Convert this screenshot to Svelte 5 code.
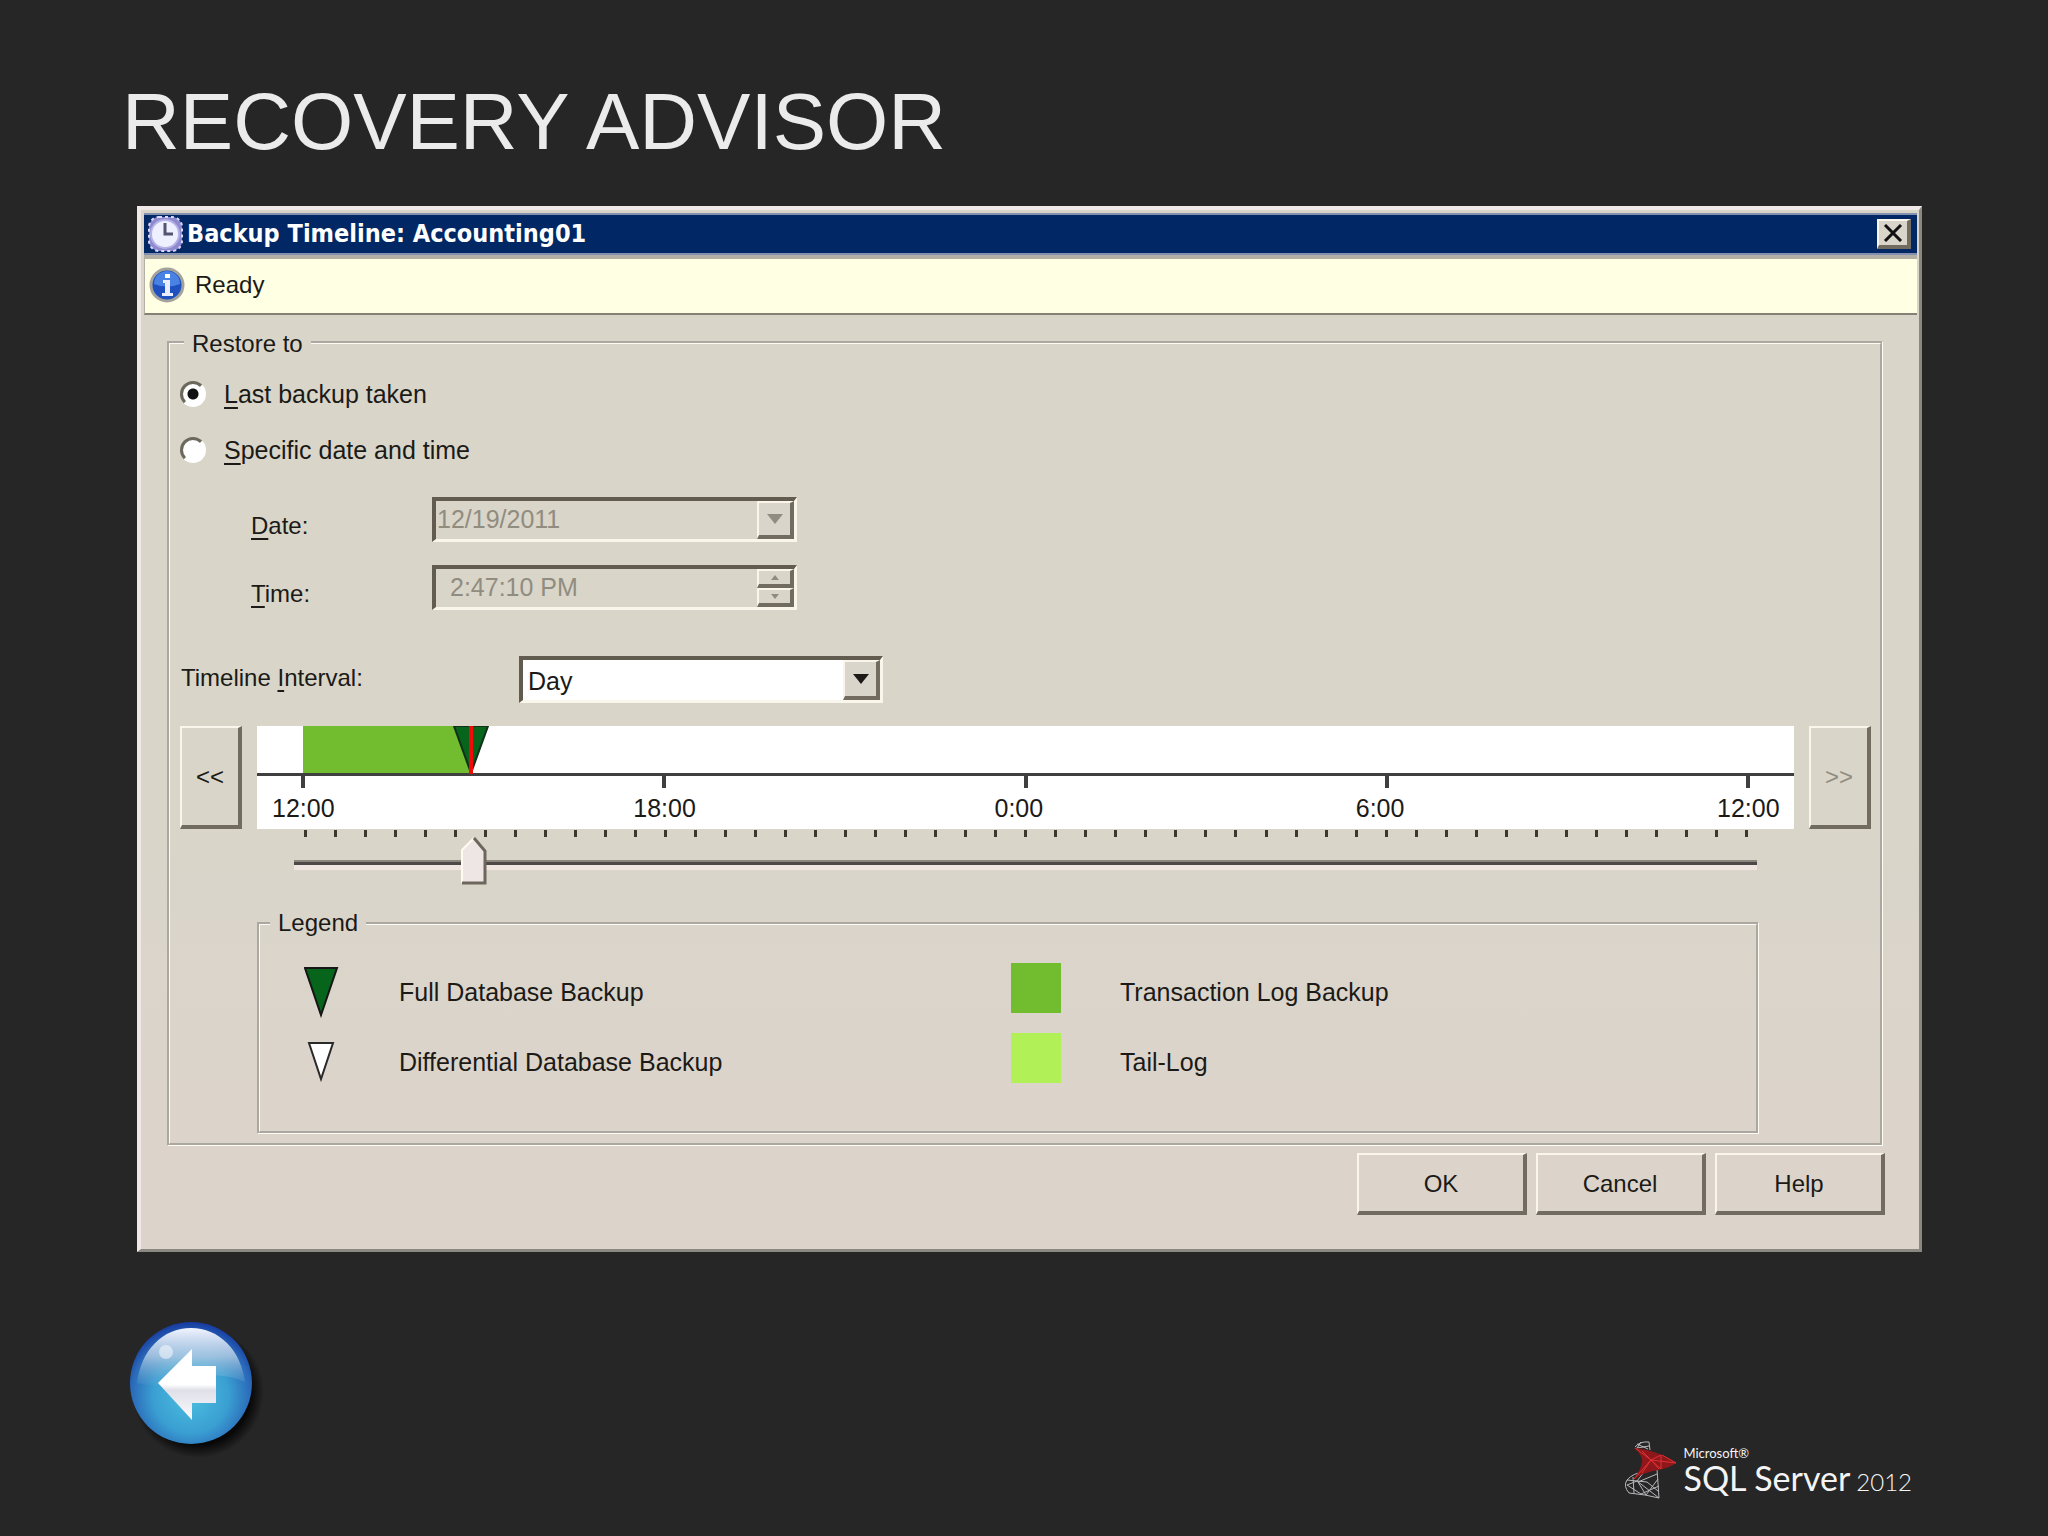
<script>
  const DAY = 1440;

  // minutes since 12:00 at the left end of the scale
  let position = $state(167);
  let restoreTo = $state('last');
  let interval = $state('Day');

  const lastBackup = 167;
  const hours = ['12:00', '18:00', '0:00', '6:00', '12:00'];
  const ticks = Array.from({ length: 49 }, (_, i) => i);
  const intervals = ['Hour', 'Six Hours', 'Day', 'Week'];

  const locked = $derived(restoreTo === 'last');
  const pct = (minutes) => `${(minutes / DAY) * 100}%`;
</script>

<main class="slide">
  <h1>RECOVERY ADVISOR</h1>

  <section class="dialog" aria-labelledby="dialog-title">
    <header class="titlebar">
      <svg class="clock" viewBox="0 0 36 36" aria-hidden="true">
        <rect x="2" y="1" width="33" height="34" rx="10" fill="#8f89cf" stroke="#dcd8fa" stroke-width="2" stroke-dasharray="3 3" />
        <circle cx="18" cy="18" r="14" fill="#eef0ff" stroke="#b5b2e6" stroke-width="2" />
        <path d="M18 7v11h8" fill="none" stroke="#55536f" stroke-width="3" />
      </svg>
      <h2 id="dialog-title">Backup Timeline: Accounting01</h2>
      <button type="button" class="close" aria-label="Close">
        <svg viewBox="0 0 20 18" aria-hidden="true">
          <path d="M2 1l16 16M18 1L2 17" stroke="#111" stroke-width="3" />
        </svg>
      </button>
    </header>

    <div class="status" role="status">
      <svg class="info" viewBox="0 0 36 36" aria-hidden="true">
        <circle cx="18" cy="18" r="16" fill="#1e50c0" stroke="#a3a39c" stroke-width="3" />
        <path d="M5 17a13 13 0 0 1 26 0q-13 5-26 0z" fill="#4a82e4" />
        <rect x="16" y="7" width="5" height="4" fill="#fff" />
        <path d="M14 13h7v13h3v3H13v-3h3V16h-2z" fill="#e8eeff" />
      </svg>
      <span>Ready</span>
    </div>

    <fieldset class="restore">
      <legend>Restore to</legend>

      <label class="choice">
        <input type="radio" name="restore" value="last" bind:group={restoreTo} />
        <span><u>L</u>ast backup taken</span>
      </label>
      <label class="choice">
        <input type="radio" name="restore" value="specific" bind:group={restoreTo} />
        <span><u>S</u>pecific date and time</span>
      </label>

      <div class="when">
        <label for="date"><u>D</u>ate:</label>
        <div class="field">
          <input id="date" type="text" value="12/19/2011" disabled={locked} />
          <button type="button" class="drop" aria-label="Pick a date" disabled={locked}>
            <svg viewBox="0 0 16 10" aria-hidden="true"><path d="M0 0h16L8 10z" fill="currentColor" /></svg>
          </button>
        </div>

        <label for="time"><u>T</u>ime:</label>
        <div class="field">
          <input id="time" class="time" type="text" value="2:47:10 PM" disabled={locked} />
          <div class="spin">
            <button type="button" aria-label="Later" disabled={locked}>
              <svg viewBox="0 0 8 5" aria-hidden="true"><path d="M0 5h8L4 0z" fill="currentColor" /></svg>
            </button>
            <button type="button" aria-label="Earlier" disabled={locked}>
              <svg viewBox="0 0 8 5" aria-hidden="true"><path d="M0 0h8L4 5z" fill="currentColor" /></svg>
            </button>
          </div>
        </div>
      </div>

      <div class="interval">
        <label for="interval">Timeline <u>I</u>nterval:</label>
        <div class="combo">
          <select id="interval" bind:value={interval}>
            {#each intervals as name}
              <option>{name}</option>
            {/each}
          </select>
          <span class="drop" aria-hidden="true">
            <svg viewBox="0 0 16 10"><path d="M0 0h16L8 10z" fill="currentColor" /></svg>
          </span>
        </div>
      </div>

      <div class="timeline">
        <button type="button" class="page" aria-label="Earlier interval">&lt;&lt;</button>

        <div class="chart">
          <div class="bars">
            <div class="log" style:width={pct(lastBackup)}></div>
            <svg class="full" style:left={pct(lastBackup)} viewBox="0 0 36 48" aria-hidden="true">
              <path d="M1 0h34L18 47z" fill="#06651b" stroke="#12301a" stroke-width="2" />
              <path d="M18 0v48" stroke="#f00a0a" stroke-width="4" />
            </svg>
          </div>
          <div class="hours">
            {#each hours as hour}
              <div class="hour"><i></i><span>{hour}</span></div>
            {/each}
          </div>
        </div>

        <button type="button" class="page" aria-label="Later interval" disabled>&gt;&gt;</button>

        <div class="below">
          <div class="ticks">
            {#each ticks as tick (tick)}
              <i></i>
            {/each}
          </div>
          <input
            class="slider"
            type="range"
            min="0"
            max={DAY}
            bind:value={position}
            aria-label="Restore point"
          />

          <fieldset class="key">
            <legend>Legend</legend>
            <div class="entries">
              <svg class="mark" viewBox="0 0 36 52" aria-hidden="true">
                <path d="M1 2h32L17 49z" fill="#06651b" stroke="#161616" stroke-width="2" />
              </svg>
              <span>Full Database Backup</span>
              <i class="swatch transaction"></i>
              <span>Transaction Log Backup</span>

              <svg class="mark" viewBox="0 0 36 52" aria-hidden="true">
                <path d="M5 7h24L17 43z" fill="#fff" stroke="#2a2a2a" stroke-width="2" />
              </svg>
              <span>Differential Database Backup</span>
              <i class="swatch tail"></i>
              <span>Tail-Log</span>
            </div>
          </fieldset>
        </div>
      </div>
    </fieldset>

    <div class="actions">
      <button type="button">OK</button>
      <button type="button">Cancel</button>
      <button type="button">Help</button>
    </div>
  </section>

  <footer>
    <a class="back" href="#previous" aria-label="Previous slide">
      <svg viewBox="0 0 140 140" aria-hidden="true">
        <defs>
          <radialGradient id="shade">
            <stop offset="0.8" stop-color="#000" stop-opacity="0.8" />
            <stop offset="1" stop-color="#000" stop-opacity="0" />
          </radialGradient>
          <radialGradient id="ball" cx="0.5" cy="0.6" r="0.62">
            <stop offset="0" stop-color="#4cc0e0" />
            <stop offset="0.5" stop-color="#3a9fd2" />
            <stop offset="0.8" stop-color="#2a68b8" />
            <stop offset="1" stop-color="#12309a" />
          </radialGradient>
          <linearGradient id="gloss" x2="0" y2="1">
            <stop offset="0" stop-color="#f2f4ff" />
            <stop offset="0.5" stop-color="#b4cde4" stop-opacity="0.8" />
            <stop offset="1" stop-color="#6fb0d4" stop-opacity="0.1" />
          </linearGradient>
          <linearGradient id="arrow" x2="0" y2="1">
            <stop offset="0.5" stop-color="#fff" />
            <stop offset="0.58" stop-color="#dfe0e8" />
            <stop offset="1" stop-color="#fbfbff" />
          </linearGradient>
        </defs>
        <circle cx="73" cy="74" r="66" fill="url(#shade)" />
        <circle cx="66" cy="65" r="61" fill="url(#ball)" />
        <path d="M12 65C16 32 38 10 66 10s50 22 54 54Q94 52 66 62 38 72 12 65z" fill="url(#gloss)" />
        <circle cx="41" cy="34" r="7" fill="#fff" opacity="0.5" />
        <path d="M33 65L67 31v17h24v37H67v17z" fill="url(#arrow)" />
      </svg>
    </a>

    <div class="brand">
      <svg viewBox="0 0 56 62" aria-hidden="true">
        <g fill="none" stroke="#b9b9bd" stroke-width="1">
          <path d="M12 7q5-6 14-5l1 8M14 4l11 5M18 2l-4 6 12-2" />
          <path d="M34 29l2 29-14-3-16-2Q0 46 4 40q6-7 17-8l13-3z" />
          <path d="M21 32l-7 9-10 4 14 9 18-8M14 41l22 17M34 34l-19 8 8 13 12-16M4 40l20 2 11 9M10 37l1 16" />
        </g>
        <path d="M11 8q14 1 28 7 10 4 14 8-6 5-18 7-14 2-25 10 9-12 9-19 0-7-8-13z" fill="#8e171b" />
        <path d="M12 8l16 12 25 3M19 11l9 9-9 13M28 20l10-5 0 14-10-9M11 39l17-19 8 9M39 15l14 8" fill="none" stroke="#e03133" stroke-width="1" />
      </svg>
      <div class="wordmark">
        <span class="maker">Microsoft®</span>
        <span class="product">SQL Server<small>2012</small></span>
      </div>
    </div>
  </footer>
</main>

<style>
  :global(body) {
    margin: 0;
    background: #262626;
  }

  .slide {
    --face: #dad5ca;
    --light: #fbf6ec;
    --dark: #716b60;
    box-sizing: border-box;
    min-height: 100vh;
    padding: 76px 126px 24px 137px;
    font-family: 'Liberation Sans', Arial, sans-serif;
    font-size: 24px;
    line-height: 28px;
    color: #1b1a17;
  }

  h1 {
    margin: 0 0 38px -15px;
    font-size: 80px;
    line-height: 92px;
    font-weight: 400;
    color: #ebebeb;
  }

  button,
  input,
  select {
    box-sizing: border-box;
    margin: 0;
    font: inherit;
    color: inherit;
  }

  button {
    display: flex;
    align-items: center;
    justify-content: center;
    padding: 0;
    border: solid;
    border-width: 2px 4px 4px 2px;
    border-color: var(--light) var(--dark) var(--dark) var(--light);
    background: transparent;
  }

  u {
    text-decoration-thickness: 2px;
    text-underline-offset: 4px;
    text-decoration-skip-ink: none;
  }

  .dialog {
    padding: 3px 2px 34px 3px;
    border: solid;
    border-width: 4px 3px 3px 4px;
    border-color: #efe8e6 #8b8781 #8b8781 #efe8e6;
    background: linear-gradient(#d9d5c9 60%, #dcd4cb 85%);
  }

  .titlebar {
    display: flex;
    align-items: center;
    height: 38px;
    padding: 0 6px 0 3px;
    border: solid #8490b0;
    border-width: 2px 0;
    background: #022765;
    color: #fff;
  }

  .clock,
  .info {
    width: 36px;
    height: 36px;
  }

  h2 {
    flex: 1;
    margin: 0 0 0 4px;
    font-family: 'DejaVu Sans Condensed', 'DejaVu Sans', sans-serif;
    font-size: 25px;
    line-height: 32px;
    font-weight: 700;
  }

  .close {
    width: 34px;
    height: 30px;
    background: var(--face);
  }

  .close svg {
    width: 20px;
    height: 18px;
  }

  .status {
    display: flex;
    align-items: center;
    gap: 10px;
    box-sizing: border-box;
    height: 60px;
    padding: 0 0 3px 4px;
    border: solid #b5b0a6;
    border-width: 4px 0 2px 1px;
    border-bottom-color: #858174;
    background: #ffffe4;
  }

  fieldset {
    min-width: 0;
    margin: 0;
    border: 3px groove #fffaf2;
  }

  legend {
    margin-left: 10px;
    padding: 0 8px;
  }

  .restore {
    margin: 11px 34px 0 23px;
    padding: 8px 9px 9px 10px;
  }

  .restore > legend {
    margin-left: 4px;
    padding-top: 4px;
  }

  .choice {
    display: flex;
    align-items: center;
    gap: 18px;
    width: max-content;
    height: 56px;
    font-size: 25px;
  }

  .choice input {
    appearance: none;
    width: 26px;
    height: 26px;
    border: 3px solid;
    border-color: #6d685d #fff #fff #6d685d;
    border-radius: 50%;
    background: #fff;
  }

  .choice input:checked {
    background: radial-gradient(circle, #111 5px, #fff 6px);
  }

  .when {
    display: grid;
    grid-template-columns: 181px 365px;
    grid-auto-rows: 68px;
    align-items: center;
    margin: 7px 0 0 71px;
  }

  .when label {
    padding-top: 14px;
  }

  .field {
    display: flex;
    box-sizing: border-box;
    height: 45px;
    border: solid;
    border-width: 4px 3px 3px 4px;
    border-color: #615b50 var(--light) var(--light) #615b50;
  }

  .field input {
    flex: 1;
    min-width: 0;
    padding: 0 0 2px 1px;
    border: 0;
    background: transparent;
    font-size: 25px;
  }

  .field input:disabled,
  button:disabled {
    color: #918c80;
  }

  .field input.time {
    padding-left: 14px;
  }

  .drop {
    display: flex;
    align-items: center;
    justify-content: center;
    box-sizing: border-box;
    width: 37px;
    border: solid;
    border-width: 2px 4px 4px 2px;
    border-color: var(--light) var(--dark) var(--dark) var(--light);
    background: var(--face);
  }

  .drop svg {
    width: 16px;
    height: 10px;
  }

  .spin {
    display: grid;
    grid-template-rows: 1fr 1fr;
    width: 37px;
  }

  .spin svg {
    width: 8px;
    height: 5px;
  }

  .interval {
    display: grid;
    grid-template-columns: 338px 364px;
    align-items: center;
    margin: 35px 0 23px 1px;
  }

  .interval label {
    padding-bottom: 4px;
  }

  .combo {
    display: grid;
    grid-template-columns: 1fr 37px;
    box-sizing: border-box;
    height: 47px;
    border: solid;
    border-width: 4px 3px 3px 4px;
    border-color: #615b50 var(--light) var(--light) #615b50;
    background: #fff;
  }

  .combo select {
    appearance: none;
    grid-area: 1 / 1 / 2 / 3;
    padding: 1px 0 0 5px;
    border: 0;
    background: transparent;
    font-size: 25px;
  }

  .combo .drop {
    grid-area: 1 / 2;
    pointer-events: none;
  }

  .timeline {
    display: grid;
    grid-template-columns: 62px 1fr 62px;
    column-gap: 15px;
  }

  .page {
    height: 103px;
  }

  .chart {
    height: 103px;
    background: #fff;
  }

  .bars {
    position: relative;
    height: 47px;
    margin: 0 46px;
  }

  .log {
    height: 100%;
    background: #72bd2f;
  }

  .full {
    position: absolute;
    top: 0;
    width: 36px;
    height: 48px;
    margin-left: -18px;
  }

  .hours {
    display: flex;
    justify-content: space-between;
    padding: 0 46px;
    border-top: 3px solid #3f3f3f;
  }

  .hour {
    display: flex;
    flex-direction: column;
    align-items: center;
    width: 0;
  }

  .hour i {
    width: 4px;
    height: 12px;
    background: #3f3f3f;
  }

  .hour span {
    width: 62px;
    margin-top: 6px;
    font-size: 25px;
  }

  .below {
    grid-column: 2;
  }

  .ticks {
    display: flex;
    justify-content: space-between;
    margin: 1px 46px 0 47px;
  }

  .ticks i {
    width: 3px;
    height: 7px;
    background: #3a382f;
  }

  .slider {
    appearance: none;
    display: block;
    width: calc(100% - 74px);
    height: 48px;
    margin: 0 37px;
    background: linear-gradient(
      transparent 23px,
      #8b857d 23px 25px,
      #4f4849 25px 28px,
      #efe6e2 28px 33px,
      transparent 33px
    );
  }

  .slider::-webkit-slider-thumb {
    appearance: none;
    width: 26px;
    height: 48px;
    background: url("data:image/svg+xml,%3Csvg xmlns='http://www.w3.org/2000/svg' viewBox='0 0 26 48'%3E%3Cpath d='M1 47V13L13 1l12 12v34z' fill='%23eee6e4'/%3E%3Cpath d='M1 46V13L13 1' fill='none' stroke='%23fffaf2' stroke-width='2'/%3E%3Cpath d='M13 1l11 13v32H1' fill='none' stroke='%236d665d' stroke-width='3'/%3E%3C/svg%3E");
  }

  .key {
    margin: 24px 35px 0 0;
    padding: 20px 0 34px;
  }

  .entries {
    display: grid;
    grid-template-columns: 95px 612px 109px 1fr;
    grid-auto-rows: 70px;
    align-items: center;
    padding-left: 44px;
    font-size: 25px;
  }

  .mark {
    width: 36px;
    height: 52px;
  }

  .swatch {
    width: 50px;
    height: 50px;
    margin-bottom: 8px;
  }

  .transaction {
    background: #72bd2f;
  }

  .tail {
    background: #b1f056;
  }

  .actions {
    display: flex;
    justify-content: flex-end;
    gap: 9px;
    margin: 7px 32px 0 0;
  }

  .actions button {
    width: 170px;
    height: 62px;
    padding-top: 2px;
  }

  footer {
    display: flex;
    align-items: flex-end;
    justify-content: space-between;
    margin-top: 66px;
  }

  .back {
    margin-left: -12px;
  }

  .back svg {
    display: block;
    width: 140px;
    height: 140px;
  }

  .brand {
    display: flex;
    align-items: center;
    gap: 4px;
    margin: 0 10px -44px 0;
    font-family: Lato, 'Open Sans', sans-serif;
    color: #f4f4f4;
  }

  .brand svg {
    width: 56px;
    height: 62px;
  }

  .wordmark {
    display: flex;
    flex-direction: column;
    padding-top: 4px;
  }

  .maker {
    font-size: 13px;
    line-height: 14px;
  }

  .product {
    font-size: 34px;
    line-height: 36px;
    white-space: nowrap;
  }

  .product small {
    margin-left: 6px;
    font-size: 24px;
    font-weight: 300;
  }
</style>
